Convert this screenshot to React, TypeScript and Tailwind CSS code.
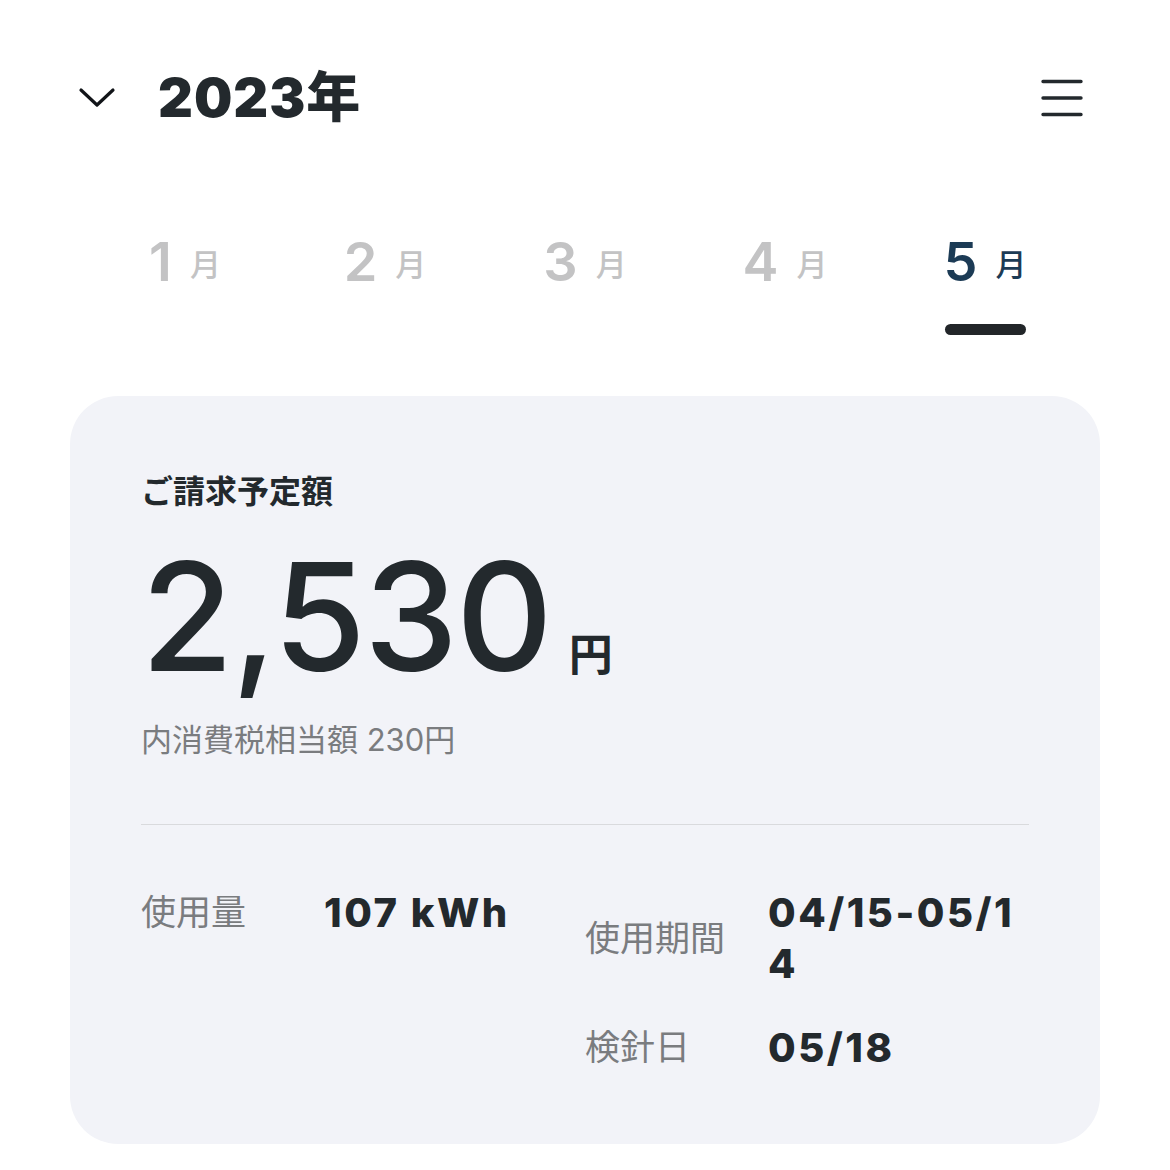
import { useState } from "react";

const months = [1, 2, 3, 4, 5];

function ChevronDown() {
  return (
    <svg width="38" height="24" viewBox="0 0 38 24" fill="none">
      <path
        d="M3 4 L19 19 L35 4"
        stroke="#111418"
        strokeWidth="3.2"
        strokeLinecap="round"
        strokeLinejoin="round"
      />
    </svg>
  );
}

function MenuIcon() {
  return (
    <svg width="44" height="40" viewBox="0 0 44 40" fill="none">
      <path
        d="M3 3.5 H41 M3 20 H41 M3 36.5 H41"
        stroke="#23292d"
        strokeWidth="3.4"
        strokeLinecap="round"
      />
    </svg>
  );
}

function DetailRow({ label, value }: { label: string; value: string }) {
  return (
    <div className="flex items-center">
      <div className="w-[183px] shrink-0 text-[35px] leading-none text-[#7a7c7f]">
        {label}
      </div>
      <div className="w-[261px] break-all text-[40px] font-extrabold leading-[51px] tracking-[2.5px] text-[#23292d]">
        {value}
      </div>
    </div>
  );
}

export default function App() {
  const [active, setActive] = useState(5);

  return (
    <div
      className="min-h-[1170px] w-[1170px] bg-white"
      style={{ fontFamily: "Inter, 'Noto Sans CJK JP', sans-serif" }}
    >
      {/* header */}
      <div className="flex items-center justify-between pl-[78px] pr-[86px] pt-[71px]">
        <div className="flex items-center gap-[42px]">
          <ChevronDown />
          <h1 className="text-[54px] font-black leading-none tracking-[1px] text-[#23292d]">
            2023年
          </h1>
        </div>
        <MenuIcon />
      </div>

      {/* month tabs */}
      <div className="mt-[110px] grid grid-cols-5 px-[85px]">
        {months.map((m) => (
          <button
            key={m}
            onClick={() => setActive(m)}
            className="flex flex-col items-center"
          >
            <span
              className={
                m === active
                  ? "flex items-end gap-[18px] text-[#1c3b55]"
                  : "flex items-end gap-[18px] text-[#c3c3c4]"
              }
            >
              <span className="text-[54px] font-semibold leading-none">{m}</span>
              <span className="mb-[9px] text-[31px] font-medium leading-none">月</span>
            </span>
            <span
              className={
                m === active
                  ? "mt-[35px] h-[11px] w-[81px] rounded-full bg-[#222629]"
                  : "mt-[35px] h-[11px] w-[81px]"
              }
            />
          </button>
        ))}
      </div>

      {/* bill card */}
      <div className="mx-[70px] mt-[61px] rounded-[48px] bg-[#f2f3f8] px-[71px] pb-[71px] pt-[80px]">
        <div className="text-[32px] font-bold leading-none text-[#23292d]">
          ご請求予定額
        </div>
        <div className="mt-[34px] flex items-baseline gap-[18px] text-[#23292d]">
          <span className="text-[150px] font-medium leading-none tracking-[-2px]">
            2,530
          </span>
          <span className="text-[44px] font-bold leading-none">円</span>
        </div>
        <div className="mt-[32px] text-[31px] leading-none text-[#7a7c7f]">
          内消費税相当額 230円
        </div>

        <div className="mt-[69px] h-px bg-[#d9dadd]" />

        <div className="mt-[62px] flex items-start">
          <div className="w-[444px] shrink-0">
            <DetailRow label="使用量" value="107 kWh" />
          </div>
          <div className="flex flex-col gap-[33px]">
            <DetailRow label="使用期間" value="04/15-05/14" />
            <DetailRow label="検針日" value="05/18" />
          </div>
        </div>
      </div>
    </div>
  );
}
